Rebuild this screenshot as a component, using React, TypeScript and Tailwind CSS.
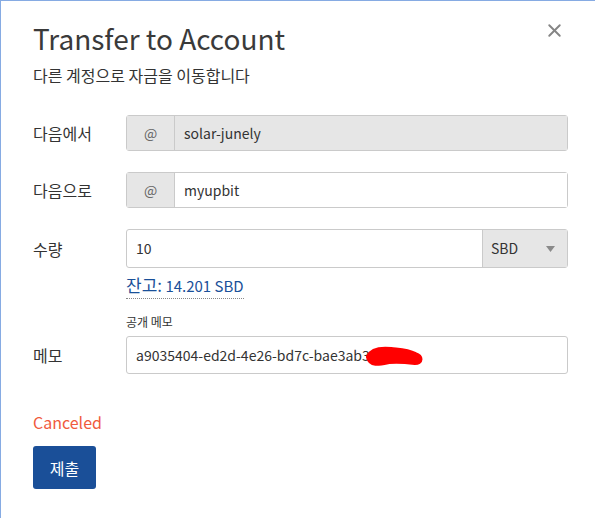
import { X } from "lucide-react";

function AddonRow({
  label,
  value,
  disabled,
}: {
  label: string;
  value: string;
  disabled?: boolean;
}) {
  return (
    <div className="flex items-center">
      <div className="w-[93px] text-[16px]">{label}</div>
      <div className="flex h-[36px] flex-1 rounded-[3px] border border-[#cacaca]">
        <div className="flex w-[48px] items-center justify-center border-r border-[#cacaca] bg-[#e6e6e6] text-[14px] text-[#666]">
          @
        </div>
        <div
          className={
            "flex flex-1 items-center px-[9px] text-[14px] " +
            (disabled ? "bg-[#e6e6e6]" : "bg-white")
          }
        >
          {value}
        </div>
      </div>
    </div>
  );
}

export default function App() {
  return (
    <div className="relative h-[518px] w-[595px] overflow-hidden border-l border-t border-[#86abe3] bg-white font-['Noto_Sans_CJK_KR','Noto_Sans',sans-serif] text-[#333]">
      <button className="absolute right-[30px] top-[19px] text-[#858585]">
        <X className="size-[21px]" strokeWidth={2.2} />
      </button>

      <div className="pl-[32px] pr-[27px] pt-[17px]">
        <h1 className="text-[28px] leading-[40px] text-[#3a3a3a]">
          Transfer to Account
        </h1>
        <p className="mt-[6px] text-[16px] leading-[22px]">
          다른 계정으로 자금을 이동합니다
        </p>

        <div className="mt-[29px] flex flex-col gap-[21px]">
          <AddonRow label="다음에서" value="solar-junely" disabled />
          <AddonRow label="다음으로" value="myupbit" />

          <div>
            <div className="flex items-center">
              <div className="w-[93px] text-[16px]">수량</div>
              <div className="flex h-[39px] flex-1 rounded-[3px] border border-[#cacaca]">
                <div className="flex flex-1 items-center px-[9px] text-[14px]">
                  10
                </div>
                <div className="flex w-[85px] items-center justify-between border-l border-[#cacaca] bg-[#e6e6e6] pl-[8px] pr-[12px] text-[14px]">
                  SBD
                  <svg width="9" height="6" viewBox="0 0 9 6">
                    <path d="M0 0 L9 0 L4.5 6 Z" fill="#8a8a8a" />
                  </svg>
                </div>
              </div>
            </div>
            <div className="ml-[93px] mt-[5px] leading-[24px]">
              <span className="border-b border-dotted border-[#888] pb-[1px] text-[#1a5099]">
                <span className="text-[17px]">잔고:</span>
                <span className="text-[15px]"> 14.201 SBD</span>
              </span>
            </div>
          </div>
        </div>

        <div className="ml-[93px] mt-[16px] text-[12px] leading-[16px]">
          공개 메모
        </div>
        <div className="mt-[6px] flex items-center">
          <div className="w-[93px] text-[16px]">메모</div>
          <div className="relative flex h-[38px] flex-1 items-center rounded-[3px] border border-[#cacaca] px-[9px] text-[14px]">
            a9035404-ed2d-4e26-bd7c-bae3ab3
            <svg
              className="absolute left-[236px] top-[8px]"
              width="64"
              height="24"
              viewBox="0 0 64 24"
            >
              <path
                d="M6 12 C9 5 18 4 28 5 C36 6 44 6 52 10 C58 12 58 17 52 17 C44 16 36 15 26 16 C16 18 8 20 6 12 Z"
                fill="#ff0000"
                stroke="#ff0000"
                strokeWidth="6"
                strokeLinejoin="round"
                strokeLinecap="round"
              />
            </svg>
          </div>
        </div>

        <p className="mt-[37px] text-[16px] leading-[22px] text-[#f05a3d]">
          Canceled
        </p>
        <button className="mt-[13px] h-[43px] w-[63px] rounded-[3px] bg-[#1a4f98] text-[16px] text-white">
          제출
        </button>
      </div>
    </div>
  );
}
